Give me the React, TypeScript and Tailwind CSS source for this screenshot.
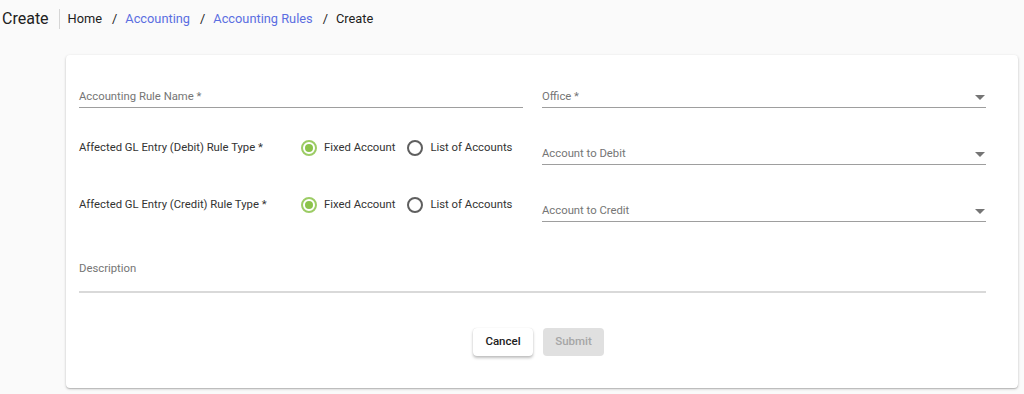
import { ReactNode } from 'react';

const Campo = ({ rotulo, seta = false }: { rotulo: string; seta?: boolean }) => (
  <div className="flex items-center justify-between border-b border-[#9e9e9e] pb-[3px]">
    <span className="text-[11.3px] leading-[14px] text-[#757575]">{rotulo}</span>
    {seta && (
      <span className="mr-[1px] h-0 w-0 border-x-[5px] border-t-[5px] border-x-transparent border-t-[#757575]" />
    )}
  </div>
);

const Radio = ({ marcado, children }: { marcado?: boolean; children: ReactNode }) => (
  <label className="flex items-center">
    <span
      className={
        marcado
          ? 'flex h-[16px] w-[16px] items-center justify-center rounded-full border-2 border-[#9ccc65]'
          : 'flex h-[16px] w-[16px] items-center justify-center rounded-full border-2 border-[#5f5f5f]'
      }
    >
      {marcado && <span className="h-[8px] w-[8px] rounded-full bg-[#8bc34a]" />}
    </span>
    <span className="ml-[7px] text-[11.3px] leading-[14px] text-[#333333]">{children}</span>
  </label>
);

const LinhaTipoRegra = ({ rotulo, contaRotulo }: { rotulo: string; contaRotulo: string }) => (
  <div className="grid grid-cols-2 items-end gap-x-[19px]">
    <div className="mb-[9px] flex items-center">
      <span className="w-[222px] text-[11.3px] leading-[14px] text-[#333333]">{rotulo}</span>
      <div className="flex items-center gap-[12px]">
        <Radio marcado>Fixed Account</Radio>
        <Radio>List of Accounts</Radio>
      </div>
    </div>
    <div className="pt-[39px]">
      <Campo rotulo={contaRotulo} seta />
    </div>
  </div>
);

export default function App() {
  return (
    <div
      className="min-h-[394px] bg-[#fafafa] text-[#212121]"
      style={{ fontFamily: 'Roboto, "Liberation Sans", sans-serif' }}
    >
      <div className="flex h-[38px] items-center">
        <h1 className="ml-[2px] text-[16px] leading-[20px]">Create</h1>
        <span className="ml-[10px] h-[20px] w-px bg-[#d6d6d6]" />
        <nav className="ml-[8px] flex items-center text-[12.8px] leading-[16px]">
          <span>Home</span>
          <span className="ml-[10px] mr-[8px]">/</span>
          <span className="text-[#5b6ee1]">Accounting</span>
          <span className="ml-[10px] mr-[8px]">/</span>
          <span className="text-[#5b6ee1]">Accounting Rules</span>
          <span className="ml-[10px] mr-[8px]">/</span>
          <span>Create</span>
        </nav>
      </div>

      <div className="ml-[66px] mt-[17px] h-[333px] w-[952px] rounded-[4px] bg-white shadow-[0_1px_3px_rgba(0,0,0,0.2),0_1px_1px_rgba(0,0,0,0.14)]">
        <div className="pl-[13px] pr-[32px] pt-[35px]">
          <div className="grid grid-cols-2 gap-x-[19px]">
            <Campo rotulo="Accounting Rule Name *" />
            <Campo rotulo="Office *" seta />
          </div>
          <LinhaTipoRegra rotulo="Affected GL Entry (Debit) Rule Type *" contaRotulo="Account to Debit" />
          <LinhaTipoRegra rotulo="Affected GL Entry (Credit) Rule Type *" contaRotulo="Account to Credit" />
          <div className="mt-[40px]">
            <span className="block text-[11.3px] leading-[14px] text-[#757575]">Description</span>
            <div className="mt-[15px] h-[2px] bg-[#d9d9d9]" />
          </div>
        </div>
        <div className="mt-[35px] flex justify-center gap-[10px] pr-[7px]">
          <button className="h-[28px] w-[60px] rounded-[4px] bg-white text-[11.5px] font-medium text-[#212121] shadow-[0_2px_3px_rgba(0,0,0,0.25),0_0_1px_rgba(0,0,0,0.15)]">
            Cancel
          </button>
          <button
            disabled
            className="h-[28px] w-[61px] rounded-[4px] bg-[#e0e0e0] text-[11.5px] font-medium text-[#a6a6a6]"
          >
            Submit
          </button>
        </div>
      </div>
    </div>
  );
}
